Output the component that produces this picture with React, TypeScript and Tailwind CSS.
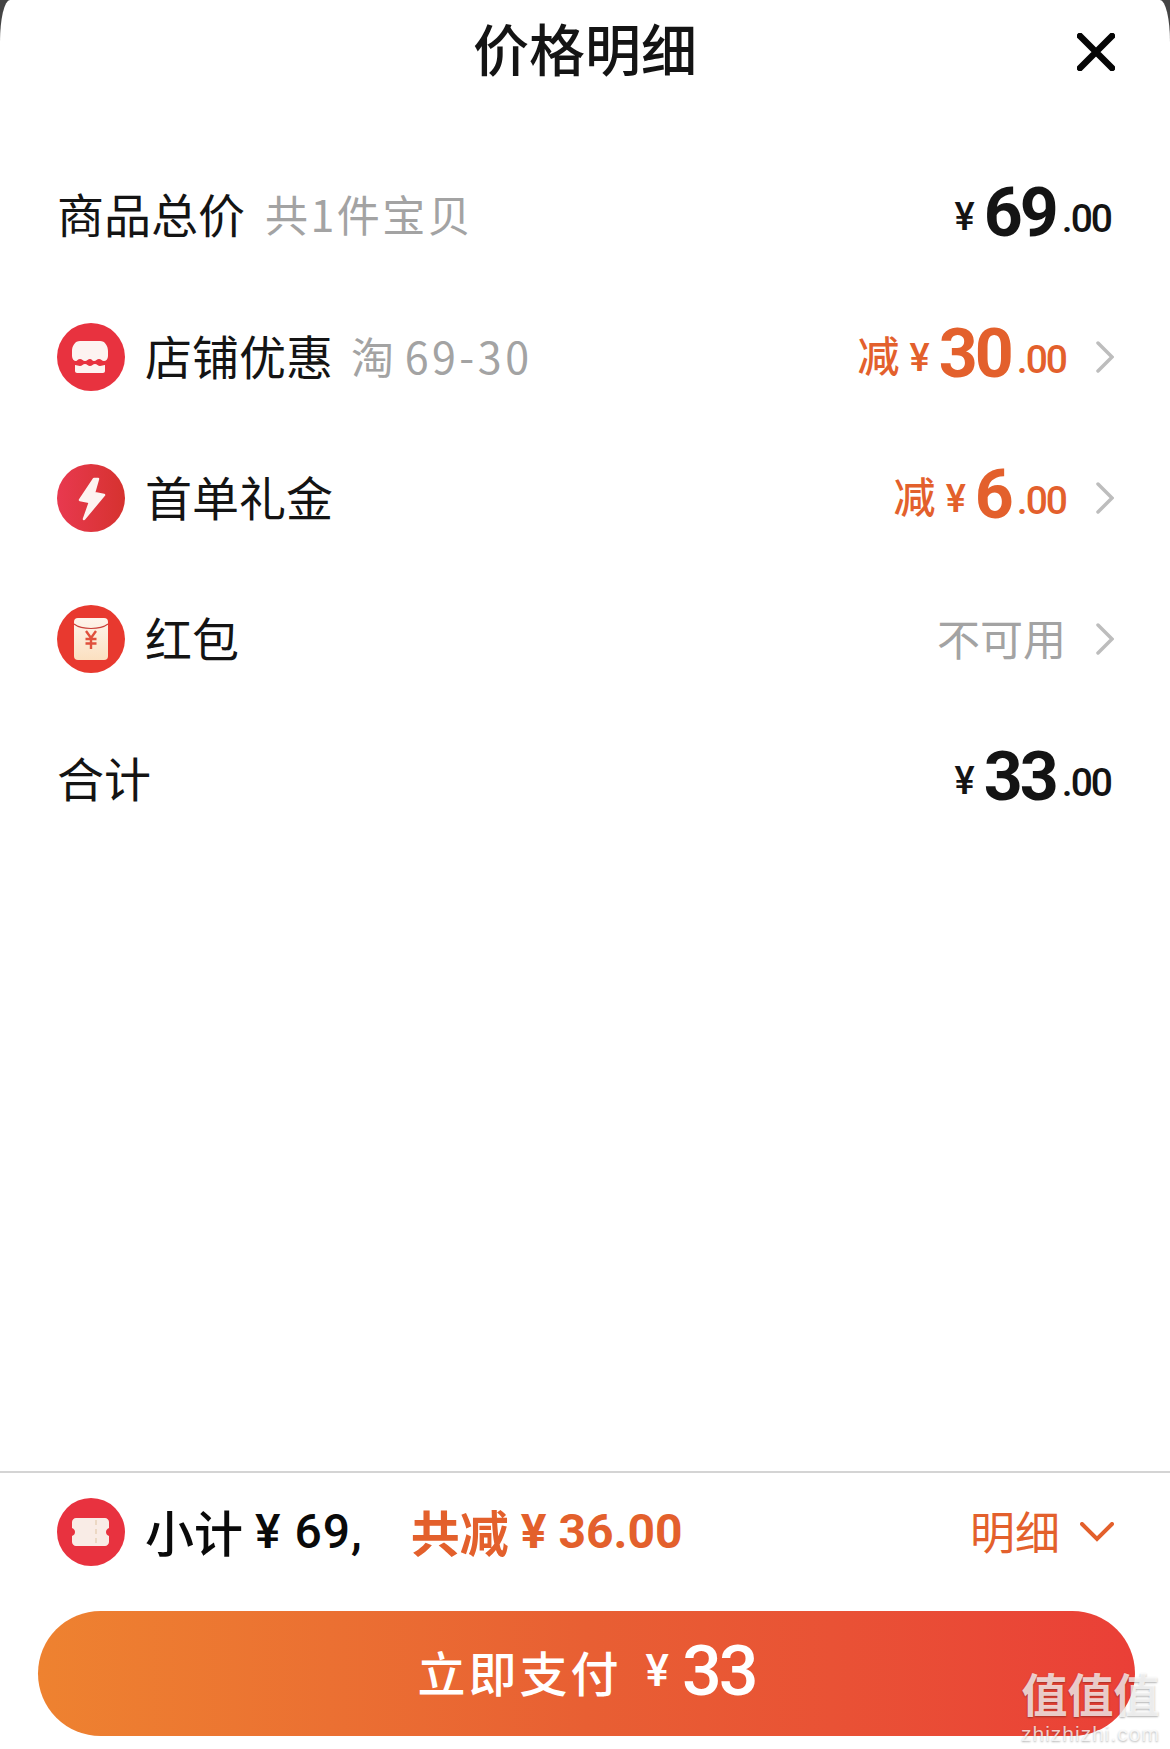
const cjk = "font-['Noto_Sans_CJK_SC',sans-serif]";
const num = "font-['Roboto','Noto_Sans_CJK_SC',sans-serif]";

const StoreIcon = () => (
  <svg viewBox="0 0 68 68" className="w-[68px] h-[68px] shrink-0">
    <circle cx="34" cy="34" r="34" fill="#e8323f" />
    <path
      d="M23 18h20c5 0 8 5 8 10v5c0 3-2 5-4 5-2 0-3-2-5-2s-3 2-5 2-2-2-4-2-3 2-5 2-3-2-5-2-3 2-4 2c-2 0-4-2-4-5v-5c0-5 3-10 8-10z"
      fill="#fdf3f1"
    />
    <path
      d="M18 42c2 0 3 1 5 1s3-2 5-2 3 2 5 2 3-2 5-2 3 2 5 2 3-1 5-1v6c0 1-1 2-2 2H20c-1 0-2-1-2-2z"
      fill="#fdf3f1"
    />
  </svg>
);

const BoltIcon = () => (
  <svg viewBox="0 0 68 68" className="w-[68px] h-[68px] shrink-0">
    <defs>
      <linearGradient id="bolt" x1="0" y1="0" x2="1" y2="0">
        <stop offset="0" stopColor="#e8394f" />
        <stop offset="1" stopColor="#d6322f" />
      </linearGradient>
    </defs>
    <circle cx="34" cy="34" r="34" fill="url(#bolt)" />
    <path
      d="M37 15L23 36l10 2-6 17 20-24-10-2 4-14z"
      fill="#fdf3f1"
      stroke="#fdf3f1"
      strokeWidth="2.500"
      strokeLinejoin="round"
    />
  </svg>
);

const PacketIcon = () => (
  <svg viewBox="0 0 68 68" className="w-[68px] h-[68px] shrink-0">
    <defs>
      <linearGradient id="packet" x1="0" y1="0" x2="0" y2="1">
        <stop offset="0" stopColor="#fef5ec" />
        <stop offset="1" stopColor="#fbe0c0" />
      </linearGradient>
    </defs>
    <circle cx="34" cy="34" r="34" fill="#e8392f" />
    <rect x="17" y="13" width="34" height="42" rx="4" fill="url(#packet)" />
    <path d="M17 19c8 6 26 6 34 0" fill="none" stroke="#c9403a" strokeWidth="1.200" />
    <path
      d="M29 26l5 7 5-7M34 33v11M28.500 34h11M28.500 38.500h11"
      fill="none"
      stroke="#e0503c"
      strokeWidth="2.400"
    />
  </svg>
);

const TicketIcon = () => (
  <svg viewBox="0 0 68 68" className="w-[68px] h-[68px] shrink-0">
    <circle cx="34" cy="34" r="34" fill="#e8323f" />
    <path
      d="M19 20h29c2 0 4 2 4 4v6c-2 1-3 2-3 4s1 3 3 4v6c0 2-2 4-4 4H19c-2 0-4-2-4-4v-6c2-1 3-2 3-4s-1-3-3-4v-6c0-2 2-4 4-4z"
      fill="#f9ece6"
    />
    <path d="M39 22v24" stroke="#ecd8c4" strokeWidth="2" strokeDasharray="5 4" />
  </svg>
);

const Chevron = () => (
  <svg viewBox="0 0 18 32" className="w-[18px] h-[32px] shrink-0 ml-[30px]">
    <path
      d="M2 2l14 14L2 30"
      fill="none"
      stroke="#bdbdbd"
      strokeWidth="3.500"
      strokeLinecap="round"
    />
  </svg>
);

const Price = ({ value, orange }: { value: string; orange?: boolean }) => (
  <div
    className={`flex items-baseline ${num} ${
      orange ? "text-[#e3602c]" : "text-[#141414]"
    }`}
  >
    <span className="text-[38px] font-medium mr-[9px] -translate-y-[6px]">¥</span>
    <span className="text-[68px] leading-none font-bold tracking-[-3px]">
      {value}
    </span>
    <span className="text-[39px] leading-none font-medium tracking-[-2px] ml-[6px] -translate-y-[4px]">
      .00
    </span>
  </div>
);

const rows = [
  { icon: <StoreIcon />, label: "店铺优惠", sub: "淘 69-30", value: "30" },
  { icon: <BoltIcon />, label: "首单礼金", value: "6" },
];

export default function App() {
  return (
    <div className={`bg-[#444444] ${cjk}`}>
      <div className="relative flex flex-col h-[1749px] bg-white rounded-tl-[10px_42px] rounded-tr-[10px_42px] overflow-hidden">
        <div className="grid grid-cols-[1fr_auto_1fr] items-center h-[100px] mb-[45px]">
          <div />
          <h1 className="text-[56px] font-medium text-[#141414] leading-none mb-[6px]">
            价格明细
          </h1>
          <div className="flex justify-end pr-[55px]">
            <svg viewBox="0 0 38 38" className="w-[38px] h-[38px] mt-[4px]">
              <path
                d="M3 3l32 32M35 3L3 35"
                stroke="#050505"
                strokeWidth="6.500"
                strokeLinecap="round"
              />
            </svg>
          </div>
        </div>

        <div className="flex flex-col pl-[57px] pr-[56px]">
          <div className="flex items-center justify-between h-[141px]">
            <div className="flex items-center mb-[4px]">
              <span className="text-[47px] text-[#141414]">商品总价</span>
              <span className="text-[43px] text-[#a3a3a3] ml-[20px] tracking-[2.500px]">
                共1件宝贝
              </span>
            </div>
            <div className="mr-[3px]">
              <Price value="69" />
            </div>
          </div>

          {rows.map((row) => (
            <div
              className="flex items-center justify-between h-[141px]"
              key={row.label}
            >
              <div className="flex items-center">
                {row.icon}
                <span className="text-[47px] text-[#141414] ml-[20px] mb-[3px]">
                  {row.label}
                </span>
                {row.sub && (
                  <span className="text-[43px] text-[#a3a3a3] ml-[18px] mb-[3px] tracking-[3.500px] [word-spacing:-6px]">
                    {row.sub}
                  </span>
                )}
              </div>
              <div className="flex items-center">
                <span className="text-[42px] font-medium text-[#e3602c] mr-[10px] mb-[7px]">
                  减
                </span>
                <Price value={row.value} orange />
                <Chevron />
              </div>
            </div>
          ))}

          <div className="flex items-center justify-between h-[141px]">
            <div className="flex items-center">
              <PacketIcon />
              <span className="text-[47px] text-[#141414] ml-[20px] mb-[3px]">红包</span>
            </div>
            <div className="flex items-center">
              <span className="text-[43px] text-[#a3a3a3] mb-[3px]">不可用</span>
              <Chevron />
            </div>
          </div>

          <div className="flex items-center justify-between h-[141px]">
            <span className="text-[47px] text-[#141414] mb-[5px]">合计</span>
            <div className="mr-[3px]">
              <Price value="33" />
            </div>
          </div>
        </div>

        <div className="mt-auto border-t-2 border-[#d4d4d4]">
          <div className="flex items-center justify-between h-[117px] mb-[21px] pl-[57px] pr-[56px]">
            <div className="flex items-center">
              <TicketIcon />
              <span className="text-[49px] font-medium text-[#0a0a0a] ml-[20px] mb-[2px]">
                小计
              </span>
              <span className={`text-[48px] font-medium text-[#0a0a0a] ml-[12px] tracking-[1px] ${num}`}>
                ¥ 69,
              </span>
              <span className="text-[49px] font-bold text-[#e3602c] ml-[48px] mb-[2px]">
                共减
              </span>
              <span className={`text-[48px] font-bold text-[#e3602c] ml-[12px] ${num}`}>
                ¥ 36.00
              </span>
            </div>
            <div className="flex items-center">
              <span className="text-[45px] text-[#e3602c] mb-[2px]">明细</span>
              <svg viewBox="0 0 34 20" className="w-[34px] h-[20px] ml-[20px]">
                <path
                  d="M2 2l15 15L32 2"
                  fill="none"
                  stroke="#e3602c"
                  strokeWidth="4"
                  strokeLinecap="round"
                />
              </svg>
            </div>
          </div>

          <div className="flex items-center justify-center h-[125px] ml-[38px] mr-[35px] mb-[13px] pb-[5px] rounded-full bg-gradient-to-r from-[#ee8230] via-[#e85f33] to-[#ea3f37] text-white">
            <span className="text-[48px] font-medium tracking-[3px]">
              立即支付
            </span>
            <span className={`text-[44px] font-medium ml-[24px] ${num}`}>¥</span>
            <span className={`text-[70px] leading-none font-medium tracking-[-3px] ml-[13px] ${num}`}>
              33
            </span>
          </div>
        </div>

        <div className="absolute right-[10px] bottom-[4px] flex flex-col items-center gap-[6px] text-white/75 [text-shadow:0_1px_2px_rgba(0,0,0,0.3)]">
          <span className="text-[46px] font-bold leading-[50px]">值值值</span>
          <span className="text-[21px] leading-[22px] font-['Liberation_Sans',sans-serif] tracking-[1px]">
            zhizhizhi.com
          </span>
        </div>
      </div>
    </div>
  );
}
